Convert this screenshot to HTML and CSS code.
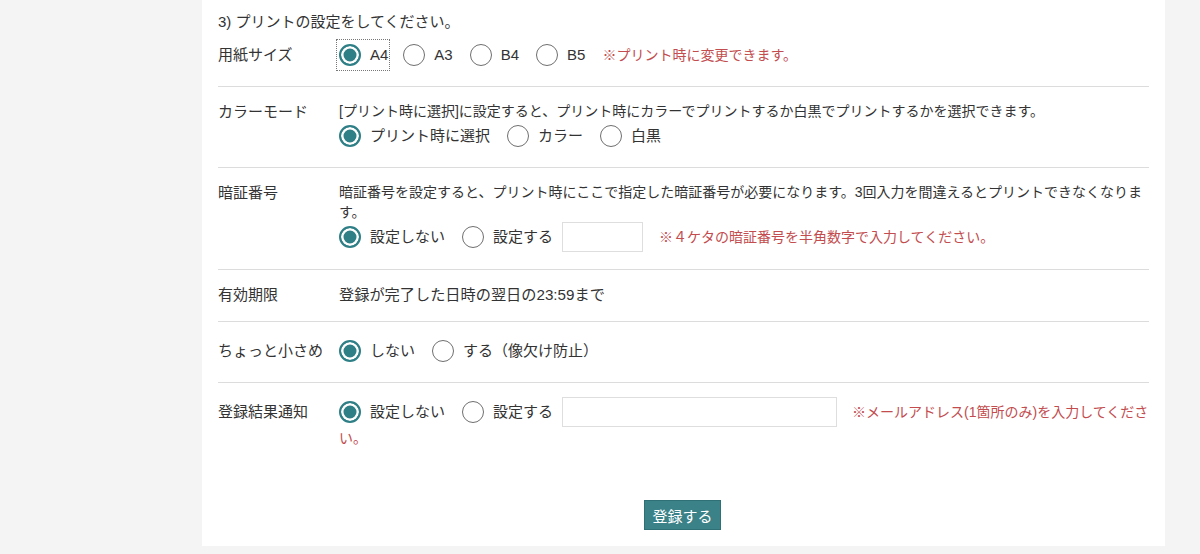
FILE: index.html
```html
<!DOCTYPE html>
<html lang="ja">
<head>
<meta charset="utf-8">
<title>プリントの設定</title>
<link rel="stylesheet" href="styles.css">
</head>
<body>
<div class="panel">
  <div class="heading">3) プリントの設定をしてください。</div>

  <div class="row first">
    <div class="label">用紙サイズ</div>
    <div class="controls">
      <span class="opt focus"><span class="radio on"></span><span class="txt">A4</span></span><span class="opt"><span class="radio"></span><span class="txt">A3</span></span><span class="opt"><span class="radio"></span><span class="txt">B4</span></span><span class="opt"><span class="radio"></span><span class="txt">B5</span></span><span class="note">※プリント時に変更できます。</span>
    </div>
  </div>

  <div class="row">
    <div class="label top">カラーモード</div>
    <div class="controls">
      <div class="desc">[プリント時に選択]に設定すると、プリント時にカラーでプリントするか白黒でプリントするかを選択できます。</div>
      <span class="opt"><span class="radio on"></span><span class="txt">プリント時に選択</span></span><span class="opt"><span class="radio"></span><span class="txt">カラー</span></span><span class="opt"><span class="radio"></span><span class="txt">白黒</span></span>
    </div>
  </div>

  <div class="row pinrow">
    <div class="label top">暗証番号</div>
    <div class="controls">
      <div class="desc">暗証番号を設定すると、プリント時にここで指定した暗証番号が必要になります。3回入力を間違えるとプリントできなくなりま<br>す。</div>
      <span class="opt"><span class="radio on"></span><span class="txt">設定しない</span></span><span class="opt tight"><span class="radio"></span><span class="txt">設定する</span></span><span class="box pin"></span><span class="note">※４ケタの暗証番号を半角数字で入力してください。</span>
    </div>
  </div>

  <div class="row">
    <div class="label top">有効期限</div>
    <div class="controls text">登録が完了した日時の翌日の23:59まで</div>
  </div>

  <div class="row">
    <div class="label">ちょっと小さめ</div>
    <div class="controls">
      <span class="opt"><span class="radio on"></span><span class="txt">しない</span></span><span class="opt"><span class="radio"></span><span class="txt">する（像欠け防止）</span></span>
    </div>
  </div>

  <div class="row last">
    <div class="label">登録結果通知</div>
    <div class="controls">
      <span class="opt"><span class="radio on"></span><span class="txt">設定しない</span></span><span class="opt tight"><span class="radio"></span><span class="txt">設定する</span></span><span class="box mail"></span><span class="note">※メールアドレス(1箇所のみ)を入力してくださ<br>い。</span>
    </div>
  </div>

  <div class="actions">
    <button class="submit" type="button">登録する</button>
  </div>
</div>
</body>
</html>
```

FILE: styles.css
```css
html, body {
  margin: 0;
  padding: 0;
}
body {
  background: #f4f4f4;
  font-family: "Liberation Sans", "Noto Sans CJK JP", sans-serif;
  color: #333;
  font-size: 15px;
}
.panel {
  margin-left: 202px;
  width: 931px;
  padding: 11px 16px 16px;
  background: #fff;
}
.heading {
  line-height: 22px;
  margin-bottom: 7px;
}
.row {
  display: grid;
  grid-template-columns: 121px 1fr;
  padding: 14px 0 16px;
  border-bottom: 1px solid #dcdcdc;
}
.row.first {
  padding-top: 0;
}
.row.pinrow {
  padding-bottom: 17px;
}
.row.last {
  border-bottom: none;
  padding-bottom: 0;
}
.label {
  line-height: 20px;
  padding-top: 5px;
  white-space: nowrap;
}
.label.top {
  padding-top: 1px;
}
.controls {
  line-height: 20px;
}
.controls.text {
  line-height: 20px;
  font-size: 15.2px;
}
.row .label.top + .controls.text {
  padding-top: 1px;
  margin-bottom: -1px;
}
.desc {
  font-size: 14px;
  line-height: 20px;
}
.opt {
  display: inline-flex;
  align-items: center;
  height: 30px;
  vertical-align: middle;
  margin-right: 17px;
}
.opt.tight {
  margin-right: 9px;
}
.opt.focus {
  outline: 1px dotted #777;
  margin-left: -2px;
  padding-left: 2px;
  padding-right: 1px;
  margin-right: 14px;
}
.radio {
  box-sizing: border-box;
  width: 22px;
  height: 22px;
  border-radius: 50%;
  border: 1.5px solid #6f6f6f;
  background: #fff;
  margin-right: 9px;
  flex: none;
}
.radio.on {
  border: 2px solid #2e7f86;
  background: #2e7f86;
  box-shadow: inset 0 0 0 2.5px #fff;
}
.txt {
  line-height: 30px;
}
.note {
  color: #c24c4e;
  font-size: 14px;
  line-height: 20px;
  vertical-align: middle;
}
.box {
  display: inline-block;
  box-sizing: border-box;
  height: 30px;
  border: 1px solid #dedede;
  background: #fff;
  vertical-align: middle;
  margin-right: 16px;
}
.box.pin {
  width: 81px;
}
.box.mail {
  width: 275px;
  margin-right: 15px;
}
.actions {
  display: flex;
  justify-content: center;
  padding-top: 52px;
}
.submit {
  height: 30px;
  padding: 0 7px;
  border: 1px solid #2f7077;
  background: #3b8188;
  color: #fff;
  font-family: "Noto Sans CJK JP", sans-serif;
  font-size: 15px;
  border-radius: 0;
  margin-right: 2px;
}
```
